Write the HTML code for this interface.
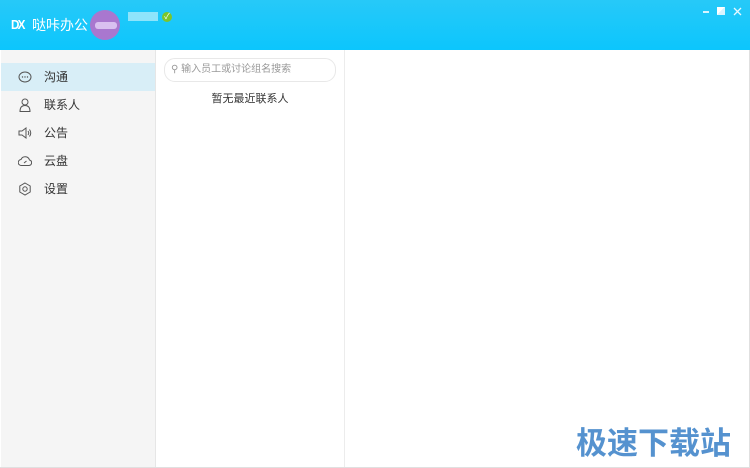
<!DOCTYPE html>
<html><head><meta charset="utf-8"><style>
body{margin:0;width:750px;height:468px;overflow:hidden;font-family:"Liberation Sans","Noto Sans CJK SC",sans-serif;background:#fff;position:relative}
.hd{position:absolute;left:0;top:0;width:750px;height:50px;background:linear-gradient(180deg,#27c9f8,#0cc6fd)}
.side{position:absolute;left:1px;top:50px;width:154px;height:417px;background:#f5f5f5;border-right:1px solid #e6e6e6}
.mid{position:absolute;left:156px;top:50px;width:188px;height:417px;border-right:1px solid #ececec;background:#fff}
.item{position:absolute;left:0;width:154px;height:28px;font-size:12px;color:#333;line-height:28px}
.item span{position:absolute;left:43px}
.item svg{position:absolute;left:17px;top:7px}
</style></head><body>
<div class="hd">
 <div style="position:absolute;left:11px;top:17px;color:#fff;font-weight:bold;font-size:13px;letter-spacing:-2px;transform:scaleX(.9);transform-origin:left">DX</div>
 <div style="position:absolute;left:32px;top:15px;color:#fff;font-size:14px">哒咔办公</div>
 <div style="position:absolute;left:90px;top:10px;width:30px;height:30px;border-radius:50%;background:#a977cf"></div>
 <div style="position:absolute;left:95px;top:22px;width:22px;height:7px;background:#d9c0f0;border-radius:3px"></div>
 <div style="position:absolute;left:128px;top:12px;width:30px;height:9px;background:#8ee4fb"></div>
 <div style="position:absolute;left:162px;top:12px;width:10px;height:10px;border-radius:50%;background:#7cc52a;color:#fff;font-size:8px;line-height:10px;text-align:center">✓</div>
 <div style="position:absolute;left:703px;top:11px;width:6px;height:1.5px;background:#d8f4ff"></div>
 <div style="position:absolute;left:717px;top:7px;width:8px;height:8px;background:linear-gradient(135deg,#fff 50%,#d8f4ff 50%)"></div>
 <svg style="position:absolute;left:733px;top:7px" width="9" height="9"><path d="M1 1L8 8M8 1L1 8" stroke="#e8f8ff" stroke-width="1.3"/></svg>
</div>
<div class="side">
 <div class="item" style="top:13px;background:#d8eef7"><svg width="14" height="14"><ellipse cx="7" cy="7" rx="6" ry="5" fill="none" stroke="#555"/><circle cx="4.5" cy="7" r=".7" fill="#555"/><circle cx="7" cy="7" r=".7" fill="#555"/><circle cx="9.5" cy="7" r=".7" fill="#555"/></svg><span>沟通</span></div>
 <div class="item" style="top:41px"><svg width="14" height="14"><circle cx="7" cy="4" r="3" fill="none" stroke="#555"/><path d="M2 13.5Q2 7.5 7 7.5Q12 7.5 12 13.5Z" fill="none" stroke="#555"/></svg><span>联系人</span></div>
 <div class="item" style="top:69px"><svg width="14" height="14"><path d="M1 5H4L8 2V12L4 9H1Z" fill="none" stroke="#555"/><path d="M10 5Q11.5 7 10 9M11.5 3.5Q14 7 11.5 10.5" fill="none" stroke="#555"/></svg><span>公告</span></div>
 <div class="item" style="top:97px"><svg width="14" height="14"><path d="M3.5 11.5A3 3 0 0 1 3 5.5A4.5 4.5 0 0 1 11.5 6A2.8 2.8 0 0 1 11 11.5Z" fill="none" stroke="#555"/><path d="M6 9L8.5 7" stroke="#555"/></svg><span>云盘</span></div>
 <div class="item" style="top:125px"><svg width="14" height="14"><path d="M7 1L12.2 4V10L7 13L1.8 10V4Z" fill="none" stroke="#555"/><circle cx="7" cy="7" r="2.2" fill="none" stroke="#555"/></svg><span>设置</span></div>
</div>
<div class="mid">
 <div style="position:absolute;left:8px;top:8px;width:170px;height:22px;border:1px solid #e8e8e8;border-radius:11px;font-size:10px;color:#999;line-height:22px"><span style="margin-left:6px">⚲</span> 输入员工或讨论组名搜索</div>
 <div style="position:absolute;left:0;width:188px;top:40px;text-align:center;font-size:11px;color:#333">暂无最近联系人</div>
</div>
<div style="position:absolute;left:749px;top:50px;width:1px;height:418px;background:#e0e0e0"></div>
<div style="position:absolute;left:0;top:467px;width:750px;height:1px;background:#e0e0e0"></div>
<div style="position:absolute;left:576px;top:418px;font-size:31px;font-weight:bold;color:#5592cf;letter-spacing:0px">极速下载站</div>
</body></html>
